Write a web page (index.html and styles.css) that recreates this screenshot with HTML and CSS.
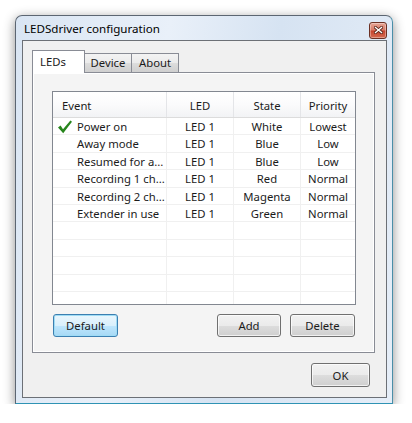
FILE: index.html
```html
<!DOCTYPE html>
<html lang="en">
<head>
  <meta charset="UTF-8">
  <title>LEDSdriver configuration</title>
  <link rel="stylesheet" href="styles.css">
</head>
<body>

  <div class="window">
    <div class="titlebar">
      <span class="title">LEDSdriver configuration</span>
      <button class="close-btn" title="Close">
        <svg width="9" height="8" viewBox="0 0 9 8">
          <path d="M1.5 1.5 L7.5 6.5 M7.5 1.5 L1.5 6.5" stroke="#5a2418" stroke-width="3" stroke-linecap="square"/>
          <path d="M1.5 1.5 L7.5 6.5 M7.5 1.5 L1.5 6.5" stroke="#fff" stroke-width="1.4" stroke-linecap="square"/>
        </svg>
      </button>
    </div>

    <div class="client">
      <div class="tabs">
        <div class="tab active">LEDs</div>
        <div class="tab">Device</div>
        <div class="tab">About</div>
      </div>

      <div class="tab-panel">
        <div class="list">
          <div class="list-head">
            <div class="cell left">Event</div>
            <div class="cell">LED</div>
            <div class="cell">State</div>
            <div class="cell">Priority</div>
          </div>
          <div class="list-body">
            <div class="row">
              <div class="cell event">
                <svg class="check" width="16" height="14" viewBox="0 0 16 14">
                  <path d="M1 7.5 L3.6 5.6 L6 9.2 L13.4 0.6 L15 1.8 L6.2 13.2 Z" fill="#27851c"/>
                </svg>
                Power on
              </div>
              <div class="cell">LED 1</div>
              <div class="cell">White</div>
              <div class="cell">Lowest</div>
            </div>
            <div class="row">
              <div class="cell event">Away mode</div>
              <div class="cell">LED 1</div>
              <div class="cell">Blue</div>
              <div class="cell">Low</div>
            </div>
            <div class="row">
              <div class="cell event">Resumed for a...</div>
              <div class="cell">LED 1</div>
              <div class="cell">Blue</div>
              <div class="cell">Low</div>
            </div>
            <div class="row">
              <div class="cell event">Recording 1 ch...</div>
              <div class="cell">LED 1</div>
              <div class="cell">Red</div>
              <div class="cell">Normal</div>
            </div>
            <div class="row">
              <div class="cell event">Recording 2 ch...</div>
              <div class="cell">LED 1</div>
              <div class="cell">Magenta</div>
              <div class="cell">Normal</div>
            </div>
            <div class="row">
              <div class="cell event">Extender in use</div>
              <div class="cell">LED 1</div>
              <div class="cell">Green</div>
              <div class="cell">Normal</div>
            </div>
            <div class="row"><div class="cell"></div><div class="cell"></div><div class="cell"></div><div class="cell"></div></div>
            <div class="row"><div class="cell"></div><div class="cell"></div><div class="cell"></div><div class="cell"></div></div>
            <div class="row"><div class="cell"></div><div class="cell"></div><div class="cell"></div><div class="cell"></div></div>
            <div class="row"><div class="cell"></div><div class="cell"></div><div class="cell"></div><div class="cell"></div></div>
            <div class="row"><div class="cell"></div><div class="cell"></div><div class="cell"></div><div class="cell"></div></div>
          </div>
        </div>

        <div class="button-row">
          <button class="btn btn-default">Default</button>
          <button class="btn btn-add">Add</button>
          <button class="btn btn-delete">Delete</button>
        </div>
      </div>

      <div class="footer">
        <button class="btn btn-ok">OK</button>
      </div>
    </div>
  </div>

</body>
</html>
```

FILE: styles.css
```css
body {
  margin: 0;
  background-color: #fff;
  font-family: 'Segoe UI', 'Noto Sans', sans-serif;
  font-size: 11.3px;
  color: #1b1b1b;
}
.window {
  margin: 15px 0 0 15px;
  width: 378px;
  height: 389px;
  box-sizing: border-box;
  display: flex;
  flex-direction: column;
  padding: 0 5px 5px 6px;
  border: 1px solid #5c6672;
  border-bottom-color: #2f93b4;
  border-right-color: #4a8ea8;
  border-radius: 7px 7px 0 0;
  background: linear-gradient(100deg, #d9e5f3 0%, #e9f0f9 35%, #d6e3f2 60%, #e6eef8 100%);
  box-shadow: 0 3px 12px rgba(0, 0, 0, 0.45);
}
.titlebar {
  height: 24px;
  display: flex;
  align-items: center;
  justify-content: space-between;
  padding-left: 2px;
}
.title {
  color: #000;
  font-size: 11.6px;
  margin-top: 1px;
}
.close-btn {
  width: 18px;
  height: 17px;
  margin-top: 4px;
  padding: 0;
  display: flex;
  align-items: center;
  justify-content: center;
  border: 1px solid #6b3023;
  border-radius: 3px;
  background: linear-gradient(#e6a595 0%, #d77a66 48%, #c5422c 52%, #d66a50 100%);
  box-shadow: inset 0 0 0 1px rgba(255, 255, 255, 0.35);
}
.client {
  flex: 1;
  display: flex;
  flex-direction: column;
  padding: 9px 11px 10px 9px;
  border: 1px solid #6c7076;
  background-color: #f0f0f0;
}
.tabs {
  display: flex;
  align-items: flex-end;
  height: 23px;
  margin-bottom: -1px;
  position: relative;
  z-index: 1;
}
.tab {
  box-sizing: border-box;
  width: 48px;
  height: 19px;
  margin-left: -1px;
  margin-bottom: 1px;
  text-align: center;
  line-height: 18px;
  border: 1px solid #898c95;
  border-bottom: none;
  background: linear-gradient(#f3f3f3 0%, #ebebeb 50%, #dddddd 51%, #cfcfcf 100%);
  color: #1b1b1b;
}
.tab.active {
  width: 53px;
  height: 23px;
  margin-left: 0;
  margin-bottom: 0;
  padding-left: 7px;
  text-align: left;
  line-height: 22px;
  background: #fff;
}
.tab-panel {
  flex: 1;
  display: flex;
  flex-direction: column;
  padding: 18px 18px 14px 19px;
  border: 1px solid #898c95;
  background-color: #f4f4f4;
  box-shadow: inset 0 0 0 1px #fff;
}
.list {
  border: 1px solid #828790;
  background-color: #fff;
}
.list-head,
.row {
  display: grid;
  grid-template-columns: 114px 67px 67px 54px;
}
.list-head {
  height: 26px;
  box-sizing: border-box;
  border-bottom: 1px solid #dcdcdc;
  background: linear-gradient(#fff 0%, #fbfbfc 50%, #f2f3f5 100%);
}
.list-head .cell {
  padding-top: 3px;
  line-height: 22px;
  border-right: 1px solid #e4e5e8;
}
.cell {
  box-sizing: border-box;
  text-align: center;
  white-space: nowrap;
  overflow: hidden;
  border-right: 1px solid #f0f0f0;
}
.cell:last-child,
.list-head .cell:last-child {
  border-right: none;
}
.list-head .cell.left {
  text-align: left;
  padding-left: 9px;
}
.list-body {
  height: 186px;
  overflow: hidden;
}
.row {
  height: 17.4px;
  box-sizing: border-box;
  border-bottom: 1px solid #f0f0f0;
}
.row .cell {
  padding-top: 1px;
  line-height: 16px;
}
.cell.event {
  text-align: left;
  padding-left: 24px;
  position: relative;
}
.check {
  position: absolute;
  left: 4px;
  top: 2px;
}
.button-row {
  display: flex;
  margin: 9px 1px 0;
}
.btn {
  box-sizing: border-box;
  height: 23px;
  padding: 0;
  font-family: inherit;
  font-size: 11.3px;
  color: #1b1b1b;
  border: 1px solid #707070;
  border-radius: 3px;
  background: linear-gradient(#f2f2f2 0%, #ebebeb 50%, #dddddd 51%, #cfcfcf 100%);
  box-shadow: inset 0 0 0 1px rgba(255, 255, 255, 0.7);
}
.btn-default {
  width: 65px;
  border-color: #3c7fb1;
  background: linear-gradient(#eaf6fd 0%, #d9f0fc 50%, #bee6fd 51%, #a7d9f5 100%);
  box-shadow: inset 0 0 0 1px #9fdcf5;
}
.btn-add {
  width: 64px;
  margin-left: auto;
}
.btn-delete {
  width: 65px;
  margin-left: 9px;
}
.footer {
  display: flex;
  justify-content: flex-end;
  margin-top: 10px;
}
.btn-ok {
  width: 59px;
  height: 24px;
  margin-right: 5px;
}
```
